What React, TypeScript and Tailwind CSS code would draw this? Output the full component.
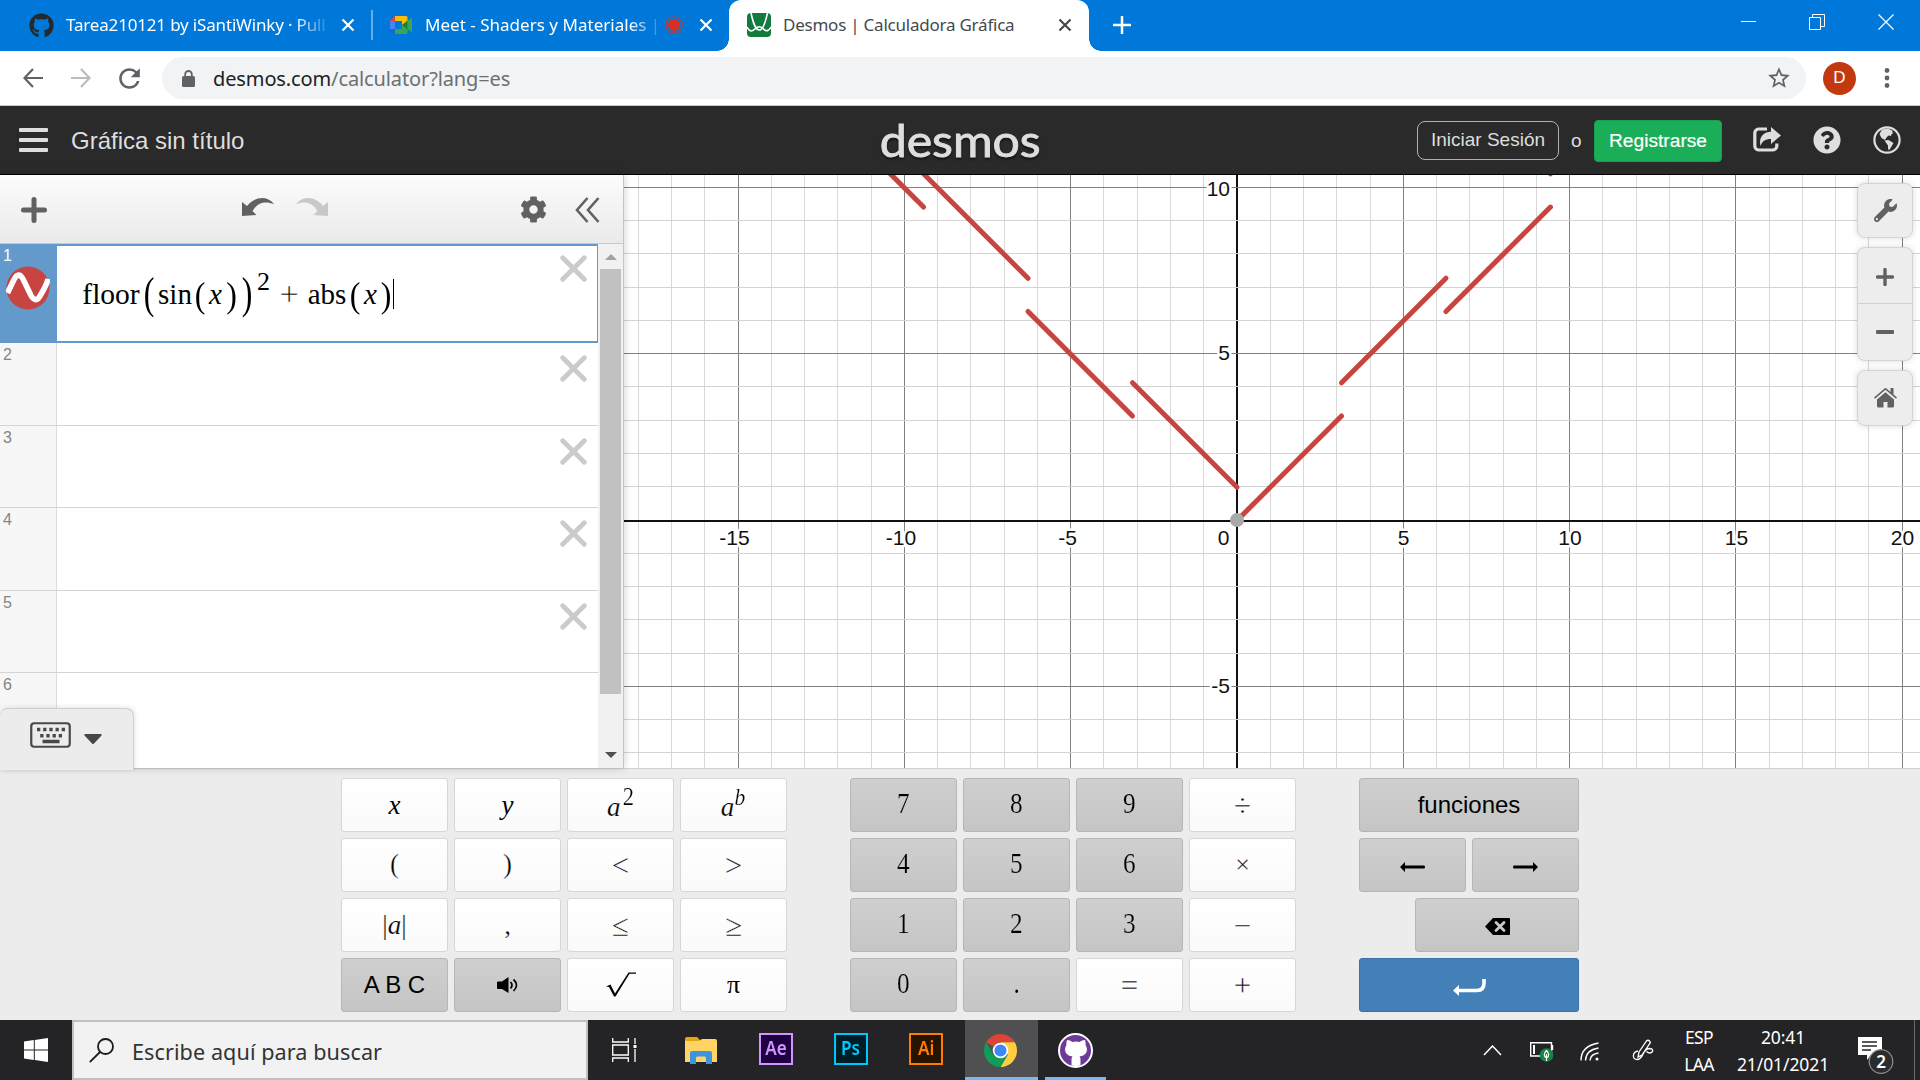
import React from "react";
import { FaGithub, FaCog, FaWrench, FaQuestionCircle } from "react-icons/fa";
import { MdStarBorder, MdRefresh } from "react-icons/md";

const UI = "font-['Noto_Sans','Open_Sans',sans-serif]";
const ARIAL = "font-['Liberation_Sans',Arial,sans-serif]";
const SERIF = "font-['Liberation_Serif','Times_New_Roman',serif]";

function TabClose({ className }: { className: string }) {
  return (
    <svg viewBox="0 0 14 14" className={`h-[14px] w-[14px] shrink-0 ${className}`}>
      <path d="M1.500 1.500 12.500 12.500M12.500 1.500 1.500 12.500" stroke="currentColor" strokeWidth="2.200" />
    </svg>
  );
}

function TabStrip() {
  return (
    <div className={`flex h-[51px] w-full items-center bg-[#0078d9] pb-px text-[17px] text-white ${UI}`}>
      <FaGithub className="ml-[29px] h-[25px] w-[25px] shrink-0 text-[#24292e]" />
      <div className="ml-[12px] w-[263px] pb-px whitespace-nowrap tracking-[-0.17px] [mask-image:linear-gradient(to_right,black_228px,transparent_266px)]">
        Tarea210121 by iSantiWinky · Pull
      </div>
      <TabClose className="ml-[12px]" />
      <div className="ml-[16px] h-[30px] w-[2px] shrink-0 bg-[#62adea]" />
      <svg viewBox="0 0 22 18" className="ml-[17px] h-[18px] w-[22px] shrink-0">
        <path d="M0 5 5 0V5Z" fill="#ea4335" />
        <path d="M5 0H16a1.500 1.500 0 0 1 1.500 1.500V6L12 9V5H5Z" fill="#fbbc04" />
        <path d="M0 5H5V13H0Z" fill="#4285f4" />
        <path d="M0 13H5V18H1.500A1.500 1.500 0 0 1 0 16.500Z" fill="#1967d2" />
        <path d="M5 13H12V9L17.500 12V16.500A1.500 1.500 0 0 1 16 18H5Z" fill="#34a853" />
        <path d="M12 9 17.500 4.500V13.500Z" fill="#188038" />
        <path d="M17.500 5 21 2.200Q22 1.700 22 2.800V15.200Q22 16.300 21 15.800L17.500 13Z" fill="#34a853" />
      </svg>
      <div className="ml-[13px] w-[232px] pb-px whitespace-nowrap tracking-[0.02px] [mask-image:linear-gradient(to_right,black_205px,rgba(0,0,0,0.25)_230px)]">
        Meet - Shaders y Materiales |
      </div>
      <svg viewBox="0 0 18 18" className="ml-[8px] h-[18px] w-[18px] shrink-0">
        <circle cx="9" cy="9" r="8.200" fill="none" stroke="#b7403f" strokeWidth="1.300" />
        <circle cx="9" cy="9" r="6" fill="#d93025" />
      </svg>
      <TabClose className="ml-[16px]" />
      <div className="relative mt-px ml-[16px] flex h-[51px] w-[360px] shrink-0 items-center rounded-t-[12px] bg-white pb-px text-[#45494d]">
        <div className="absolute bottom-0 left-[-12px] h-[12px] w-[12px] bg-[radial-gradient(circle_at_0_0,#0078d9_11.5px,white_12px)]" />
        <div className="absolute right-[-12px] bottom-0 h-[12px] w-[12px] bg-[radial-gradient(circle_at_100%_0,#0078d9_11.5px,white_12px)]" />
        <svg viewBox="0 0 24 24" className="ml-[18px] h-[24px] w-[24px] shrink-0">
          <rect width="24" height="24" rx="4" fill="#127a3d" />
          <g fill="none" stroke="white" strokeWidth="1.600">
            <path d="M4 0C6 9 8 17 12.500 17C16 17 18.500 9 20.500 0" />
            <path d="M0 14C3 20 6 18 8.500 15.500C11 13 14 13 16.500 16C19 19 22 18 24 14" />
          </g>
        </svg>
        <div className="ml-[12px] w-[264px] pb-px whitespace-nowrap tracking-[-0.23px]">Desmos | Calculadora Gráfica</div>
        <TabClose className="ml-[11px]" />
      </div>
      <svg viewBox="0 0 18 18" className="ml-[24px] h-[18px] w-[18px] shrink-0">
        <path d="M9 0V18M0 9H18" stroke="white" strokeWidth="2.500" />
      </svg>
      <svg viewBox="0 0 16 16" className="mb-[7px] ml-auto h-[16px] w-[16px] shrink-0">
        <path d="M0 7.500H15" stroke="white" />
      </svg>
      <svg viewBox="0 0 16 16" className="mb-[7px] ml-[52px] h-[16px] w-[16px] shrink-0" fill="none" stroke="white">
        <path d="M0.500 3.500H11.500V15.500H0.500ZM3.500 3V0.500H15.500V12.500H12" />
      </svg>
      <svg viewBox="0 0 16 16" className="mr-[26px] mb-[7px] ml-[53px] h-[16px] w-[16px] shrink-0">
        <path d="M0.500 0.500 15.500 15.500M15.500 0.500 0.500 15.500" stroke="white" strokeWidth="1.200" />
      </svg>
    </div>
  );
}

function AddressBar() {
  return (
    <div className={`flex h-[55px] items-center border-b border-[#c9cacc] bg-white ${UI}`}>
      <svg viewBox="0 0 20 20" className="ml-[23px] h-[20px] w-[20px] shrink-0" fill="none" stroke="#5f6368" strokeWidth="2.200">
        <path d="M10 1 1.500 10 10 19M1.500 10H20" />
      </svg>
      <svg viewBox="0 0 20 20" className="ml-[28px] h-[20px] w-[20px] shrink-0" fill="none" stroke="#babcbe" strokeWidth="2.200">
        <path d="M10 1 18.500 10 10 19M18.500 10H0" />
      </svg>
      <MdRefresh className="ml-[23px] h-[31px] w-[31px] shrink-0 text-[#5f6368]" />
      <div className="ml-[17px] flex h-[42px] w-[1644px] items-center rounded-full bg-[#f1f3f4]">
        <svg viewBox="0 0 13 17" className="ml-[20px] h-[17px] w-[13px]">
          <rect y="6" width="13" height="11" rx="1.500" fill="#5f6368" />
          <path d="M3.200 7V4.300A3.300 3.300 0 0 1 9.800 4.300V7" fill="none" stroke="#5f6368" strokeWidth="1.800" />
        </svg>
        <div className="mt-px ml-[18px] flex-1 text-[20px] tracking-[-0.12px] text-[#6b6f73]">
          <span className="text-[#202124]">desmos.com</span>/calculator?lang=es
        </div>
        <MdStarBorder className="mr-[14px] h-[26px] w-[26px] text-[#5f6368]" />
      </div>
      <div className={`ml-[17px] flex h-[33px] w-[33px] items-center justify-center rounded-full bg-[#c2390f] text-[17px] text-white ${ARIAL}`}>D</div>
      <svg viewBox="0 0 6 20" className="ml-[28px] h-[20px] w-[6px] shrink-0" fill="#5f6368">
        <circle cx="3" cy="2.500" r="2.400" />
        <circle cx="3" cy="10" r="2.400" />
        <circle cx="3" cy="17.500" r="2.400" />
      </svg>
    </div>
  );
}

function Header() {
  return (
    <div className={`relative flex h-[69px] items-center border-b border-black bg-[#2a2a2a] pt-px text-[#dedede] ${ARIAL}`}>
      <div className="mb-px ml-[19px] flex w-[29px] flex-col gap-[6px]">
        <div className="h-[4px] rounded-[1px] bg-[#dedede]" />
        <div className="h-[4px] rounded-[1px] bg-[#dedede]" />
        <div className="h-[4px] rounded-[1px] bg-[#dedede]" />
      </div>
      <div className="ml-[23px] flex-1 text-[24px]">Gráfica sin título</div>
      <div className="absolute inset-x-0 top-px flex h-[67px] justify-center font-['Lato',sans-serif] text-[45px] leading-[67px] font-normal [-webkit-text-stroke:0.9px_#dedede]">
        <span className="scale-x-[1.07] drop-shadow-[0_2px_1px_rgba(0,0,0,0.5)]">desmos</span>
      </div>
      <div className="mb-px flex h-[39px] w-[142px] items-center justify-center rounded-[8px] border border-[#b0b0b0] pt-px text-[19px]">Iniciar Sesión</div>
      <div className="mt-px ml-[12px] w-[23px] text-[19px]">o</div>
      <div className="flex h-[42px] w-[128px] items-center justify-center rounded-[4px] border border-[#1a9f50] bg-[#1aae58] pt-[2px] text-[19.2px] text-white [-webkit-text-stroke:0.2px_white]">Registrarse</div>
      <svg viewBox="0 0 28 25" className="mb-[2px] ml-[31px] h-[25px] w-[28px]">
        <path d="M14 2H5.500A4 4 0 0 0 1.800 6V19A4 4 0 0 0 5.500 23H20A4 4 0 0 0 23.800 19V16.500" fill="none" stroke="#dedede" strokeWidth="3.200" />
        <path d="M18 0 28 8.500 18 17V12C12 12 9 14.500 7.500 19C5.500 11 10 5 18 4.800Z" fill="#dedede" />
      </svg>
      <FaQuestionCircle className="mb-px ml-[32px] h-[28px] w-[28px]" />
      <svg viewBox="0 0 28 28" className="mr-[19px] mb-[2px] ml-[32px] h-[28px] w-[28px]">
        <circle cx="14" cy="14" r="12.600" fill="none" stroke="#dedede" strokeWidth="2.200" />
        <path d="M9 3.500 15 2.500 19 4.500 20 7.500 18.500 8 18 10 15.500 9.500 13.500 11.500 12 14 8.500 12 6.500 8Z" fill="#dedede" />
        <path d="M11.500 14.500 15.500 14 20.500 17 18.500 20.500 16 24.500 15 22.500V19.500Z" fill="#dedede" />
      </svg>
    </div>
  );
}

function DeleteCross({ className = "" }: { className?: string }) {
  return (
    <svg viewBox="0 0 27 27" className={`h-[27px] w-[27px] shrink-0 ${className}`}>
      <path d="M2.700 2.700 24.300 24.300M24.300 2.700 2.700 24.300" stroke="#cbcbcb" strokeWidth="4.800" strokeLinecap="round" />
    </svg>
  );
}

function Glyph({ w, children, className = "" }: { w: string; children: React.ReactNode; className?: string }) {
  return <span className={`flex shrink-0 justify-center ${w} ${className}`}>{children}</span>;
}

function Expression() {
  return (
    <div className={`mt-[28px] ml-[24px] flex h-[40px] flex-1 items-center text-[29px] leading-[40px] text-black ${SERIF}`}>
      <Glyph w="w-[60px]" className="text-[29.5px]">floor</Glyph>
      <Glyph w="w-[16px]" className="mb-[2px] scale-x-110 scale-y-[1.5]">(</Glyph>
      <Glyph w="w-[36px]">sin</Glyph>
      <Glyph w="w-[14px]" className="mb-px scale-x-110 scale-y-[1.27]">(</Glyph>
      <Glyph w="w-[17px]" className="italic">x</Glyph>
      <Glyph w="w-[15px]" className="mb-px scale-x-110 scale-y-[1.27]">)</Glyph>
      <Glyph w="w-[16px]" className="mb-[2px] scale-x-110 scale-y-[1.5]">)</Glyph>
      <Glyph w="w-[17px]" className="mb-[24px] text-[26px]">2</Glyph>
      <Glyph w="w-[34px]" className="text-[34px] [-webkit-text-stroke:0.4px_white]">+</Glyph>
      <Glyph w="w-[42px]">abs</Glyph>
      <Glyph w="w-[14px]" className="mb-px scale-x-110 scale-y-[1.27]">(</Glyph>
      <Glyph w="w-[17px]" className="italic">x</Glyph>
      <Glyph w="w-[14px]" className="mb-px scale-x-110 scale-y-[1.27]">)</Glyph>
      <span className="h-[30px] w-px bg-black" />
    </div>
  );
}

function ExpressionPanel() {
  return (
    <div className="relative z-10 flex h-[593px] w-[624px] shrink-0 flex-col border-r border-[#c4c4c4] bg-white shadow-[0_0_8px_rgba(0,0,0,0.2)]">
      <div className="flex h-[69px] shrink-0 items-center border-b border-[#c8c8c8] bg-linear-to-b from-[#fcfcfc] to-[#eaeaea] pt-px">
        <svg viewBox="0 0 26 26" className="ml-[21px] h-[26px] w-[26px]">
          <path d="M13 2.500V23.500M2.500 13H23.500" stroke="#616161" strokeWidth="5" strokeLinecap="round" />
        </svg>
        <svg viewBox="0 0 32 18" className="mb-[6px] ml-[195px] h-[18px] w-[32px]">
          <path d="M0 4 5 8C11 0 24 -4 32 6C23 3 16 4 10.500 13L14.500 17 0 18Z" fill="#616161" />
        </svg>
        <svg viewBox="0 0 32 18" className="mb-[6px] ml-[22px] h-[18px] w-[32px]">
          <path d="M32 4 27 8C21 0 8 -4 0 6C9 3 16 4 21.500 13L17.500 17 32 18Z" fill="#c8c8c8" />
        </svg>
        <FaCog className="ml-[192px] h-[27px] w-[27px] text-[#616161]" />
        <svg viewBox="0 0 25 26" className="ml-[28px] h-[26px] w-[25px]">
          <path d="M12.500 1 2 13 12.500 25M23.500 1 13 13 23.500 25" fill="none" stroke="#616161" strokeWidth="2.600" />
        </svg>
      </div>
      <div className="flex min-h-0 flex-1">
        <div className="flex w-[598px] flex-col overflow-hidden">
          <div className="flex h-[99px] shrink-0 border-y-2 border-r border-[#6499cc]">
            <div className={`w-[57px] bg-[#6499cc] pl-[3px] text-[16px] leading-[20px] text-white ${ARIAL}`}>
              1
              <svg viewBox="0 0 44 44" className="ml-[3px] h-[44px] w-[44px]">
                <circle cx="22" cy="22" r="21.500" fill="#c74440" />
                <path d="M1.500 27 8 13.500Q12.500 5 17 13L25 29.500Q29.500 37.500 34 30L38 23Q41.500 16 42 13" fill="none" stroke="white" strokeWidth="5.600" />
              </svg>
            </div>
            <Expression />
            <DeleteCross className="mt-[9px] mr-[10px]" />
          </div>
          {["2", "3", "4", "5", "6"].map((n) => (
            <div key={n} className={n === "6" ? "flex flex-1" : "flex h-[82.6px] shrink-0 border-b border-[#d4d4d4]"}>
              <div className={`w-[57px] border-r border-[#dcdcdc] bg-[#f7f7f7] pl-[3px] text-[16px] leading-[23px] text-[#858585] ${ARIAL}`}>{n}</div>
              <div className="flex-1" />
              {n !== "6" && <DeleteCross className="mt-[12px] mr-[11px]" />}
            </div>
          ))}
        </div>
        <div className="flex w-[25px] flex-col items-center bg-[#f1f1f1]">
          <svg viewBox="0 0 12 6" className="mt-[10px] h-[6px] w-[12px]"><path d="M0 6 6 0 12 6Z" fill="#a3a3a3" /></svg>
          <div className="mt-[9px] h-[425px] w-[21px] bg-[#c1c1c1]" />
          <svg viewBox="0 0 12 6" className="mt-[58px] h-[6px] w-[12px]"><path d="M0 0H12L6 6Z" fill="#505050" /></svg>
        </div>
      </div>
      <div className="absolute bottom-[-2px] left-0 flex h-[62px] w-[134px] items-center rounded-t-[8px] border-t border-r border-[#cfcfcf] bg-[#ececec] shadow-[1px_-1px_5px_rgba(0,0,0,0.1)]">
        <svg viewBox="0 0 41 26" className="mb-[10px] ml-[30px] h-[26px] w-[41px]">
          <rect x="1.250" y="1.250" width="38.500" height="23.500" rx="3" fill="none" stroke="#484848" strokeWidth="2.200" />
          <path d="M7 7.500H35" stroke="#484848" strokeWidth="3.500" strokeDasharray="3.300 2.870" />
          <path d="M10.200 13.800H32.500" stroke="#484848" strokeWidth="3.500" strokeDasharray="3.300 2.870" />
          <path d="M12.500 19.500H29.500" stroke="#484848" strokeWidth="3.500" />
        </svg>
        <svg viewBox="0 0 18 10" className="mb-[2px] ml-[13px] h-[10px] w-[18px]"><path d="M1 0H17Q18 0.500 17.500 1.500L10 9.500Q9 10.500 8 9.500L0.500 1.500Q0 0.500 1 0Z" fill="#484848" /></svg>
      </div>
    </div>
  );
}

const OX = 1237;
const OY = 520.5;
const UNIT = 33.26;
const gx = (x: number) => OX + x * UNIT;
const gy = (y: number) => OY - y * UNIT;

const xLines = Array.from({ length: 39 }, (_, i) => i - 18);
const yLines = Array.from({ length: 18 }, (_, i) => i - 7);
const PI = Math.PI;

const segments = [-4, -3, -2, -1, 0, 1, 2, 3].map((k) => {
  const lift = k % 2 === 0 ? 0 : 1;
  const a = k * PI;
  const b = (k + 1) * PI;
  return [gx(a), gy(Math.abs(a) + lift), gx(b), gy(Math.abs(b) + lift)];
});

function Graph() {
  return (
    <svg viewBox="624 175 1296 593" className="h-[593px] w-[1296px] shrink-0 bg-white">
      <g shapeRendering="crispEdges">
        {xLines.map((x) => (
          <rect key={x} x={Math.floor(gx(x)) - (x === 0 ? 1 : 0)} y={175} width={x === 0 ? 2 : 1} height={593} fill={x === 0 ? "#111" : x % 5 === 0 ? "#808080" : "#d8d8d8"} />
        ))}
        {yLines.map((y) => (
          <rect key={y} x={624} y={Math.round(gy(y)) - 1} width={1296} height={y === 0 ? 2 : 1} fill={y === 0 ? "#111" : y % 5 === 0 ? "#808080" : "#d4d4d4"} />
        ))}
      </g>
      {segments.map(([x1, y1, x2, y2]) => (
        <line key={x1} x1={x1} y1={y1} x2={x2} y2={y2} stroke="#c74440" strokeWidth="5" strokeLinecap="round" />
      ))}
      <circle cx={OX} cy={OY - 0.5} r="7" fill="#a9a9a9" />
      <g className={ARIAL} fontSize="21" fill="#111" stroke="white" strokeWidth="5" paintOrder="stroke" strokeLinejoin="round">
        <text x="734.500" y="545" textAnchor="middle">-15</text>
        <text x="901" y="545" textAnchor="middle">-10</text>
        <text x="1067.500" y="545" textAnchor="middle">-5</text>
        <text x="1229.500" y="545" textAnchor="end">0</text>
        <text x="1403.500" y="545" textAnchor="middle">5</text>
        <text x="1570" y="545" textAnchor="middle">10</text>
        <text x="1736.500" y="545" textAnchor="middle">15</text>
        <text x="1902.500" y="545" textAnchor="middle">20</text>
        <text x="1230" y="195.500" textAnchor="end">10</text>
        <text x="1230" y="360" textAnchor="end">5</text>
        <text x="1230" y="693" textAnchor="end">-5</text>
      </g>
    </svg>
  );
}

function ZoomControls() {
  return (
    <div className="absolute top-[8px] right-[7px] z-10 flex w-[56px] flex-col gap-[9px] text-[#616161]">
      <div className="flex h-[55px] items-center justify-center rounded-[8px] border border-[#d4d4d4] bg-[#ededed] shadow-[0_0_6px_rgba(0,0,0,0.15)]">
        <FaWrench className="mb-px h-[23px] w-[23px]" />
      </div>
      <div className="flex h-[114px] flex-col rounded-[8px] border border-[#d4d4d4] bg-[#ededed] shadow-[0_0_6px_rgba(0,0,0,0.15)]">
        <div className="flex h-[56px] items-center justify-center border-b border-[#d2d2d2]">
          <svg viewBox="0 0 18 18" className="mt-[3px] h-[18px] w-[18px]"><path d="M9 1.500V16.500M1.500 9H16.500" stroke="currentColor" strokeWidth="3.400" strokeLinecap="round" /></svg>
        </div>
        <div className="flex flex-1 items-center justify-center">
          <svg viewBox="0 0 18 18" className="h-[18px] w-[18px]"><path d="M1.500 9H16.500" stroke="currentColor" strokeWidth="4" strokeLinecap="round" /></svg>
        </div>
      </div>
      <div className="flex h-[56px] items-center justify-center rounded-[8px] border border-[#d4d4d4] bg-[#ededed] shadow-[0_0_6px_rgba(0,0,0,0.15)]">
        <svg viewBox="0 0 23 20" className="mb-px h-[20px] w-[23px]" fill="#616161">
          <path d="M16.500 0H19.500V6.500L23 9.500 22 10.800 11.500 1.800 1 10.800 0 9.500 10.500 .4Q11.500-.3 12.500 .4L16.500 4Z" />
          <path d="M11.500 4.200 20 11.500V18Q20 19.500 18.500 19.500H13.500V14H9.500V19.500H4.500Q3 19.500 3 18V11.500Z" />
        </svg>
      </div>
    </div>
  );
}

const KEY = "flex h-[54px] items-center justify-center rounded-[3px] border text-black";
const LIGHT = `${KEY} border-[#d6d6d6] bg-linear-to-b from-white to-[#fafafa]`;
const DARK = `${KEY} border-[#b6b6b6] bg-linear-to-b from-[#cfcfcf] to-[#c5c5c5]`;

function Key({ dark = false, className = "", children }: { dark?: boolean; className?: string; children: React.ReactNode }) {
  return <div className={`${dark ? DARK : LIGHT} ${className}`}>{children}</div>;
}

function Digit({ children }: { children: React.ReactNode }) {
  return (
    <Key dark>
      <span className="mb-[3px] scale-x-[0.87] text-[29px] [-webkit-text-stroke:0.2px_#cacaca]">{children}</span>
    </Key>
  );
}

function Op({ children, className = "text-[31px] [-webkit-text-stroke:0.35px_white]" }: { children: React.ReactNode; className?: string }) {
  return (
    <Key>
      <span className={`leading-none ${className}`}>{children}</span>
    </Key>
  );
}

function Keypad() {
  return (
    <div className={`relative z-[5] flex h-[252px] gap-[63px] border-t border-[#d0d0d0] bg-[#ececec] pt-[9px] pl-[341px] ${SERIF}`}>
      <div className="grid h-[234px] w-[446px] grid-cols-4 gap-[6px]">
        <Op className="text-[27px] italic">x</Op>
        <Op className="text-[27px] italic">y</Op>
        <Key className="text-[27px] italic [-webkit-text-stroke:0.2px_white]">
          <span className="mt-[4px]">a</span>
          <span className="mb-[16px] ml-px scale-x-90 text-[25px] not-italic">2</span>
        </Key>
        <Key className="text-[27px] italic [-webkit-text-stroke:0.2px_white]">
          <span className="mt-[4px]">a</span>
          <span className="mb-[16px] scale-x-90 text-[24px]">b</span>
        </Key>
        <Op className="mb-[2px] text-[27px] [-webkit-text-stroke:0.3px_white]">(</Op>
        <Op className="mb-[2px] text-[27px] [-webkit-text-stroke:0.3px_white]">)</Op>
        <Op>&lt;</Op>
        <Op>&gt;</Op>
        <Key className="text-[27px] [-webkit-text-stroke:0.2px_white]">
          <span>|</span><span className="italic">a</span><span>|</span>
        </Key>
        <Op className="text-[27px] [-webkit-text-stroke:0.3px_white]">,</Op>
        <Op>≤</Op>
        <Op>≥</Op>
        <Key dark className={`text-[24px] ${ARIAL}`}>A B C</Key>
        <Key dark>
          <svg viewBox="0 0 21 16" className="h-[16px] w-[21px]">
            <path d="M1 4.500H5L11.500 0V16L5 12H1Q0 12 0 11V5.500Q0 4.500 1 4.500Z" />
            <path d="M13.500 5Q16.500 8 13.500 11.500M16.500 2.500Q22.500 8 16.500 14" fill="none" stroke="black" strokeWidth="1.700" />
          </svg>
        </Key>
        <Key>
          <svg viewBox="0 0 30 25" className="mb-px h-[25px] w-[30px]">
            <path d="M0 14.500 4.500 12.500 9 21.500 22.500 .5H30V1.700H23.500L9.500 24.500H8L3 15Z" />
          </svg>
        </Key>
        <Op className="text-[26px]">π</Op>
      </div>
      <div className="grid h-[234px] w-[446px] grid-cols-4 gap-[6px]">
        <Digit>7</Digit>
        <Digit>8</Digit>
        <Digit>9</Digit>
        <Op>÷</Op>
        <Digit>4</Digit>
        <Digit>5</Digit>
        <Digit>6</Digit>
        <Op className="text-[26px] [-webkit-text-stroke:0.3px_white]">×</Op>
        <Digit>1</Digit>
        <Digit>2</Digit>
        <Digit>3</Digit>
        <Op>−</Op>
        <Digit>0</Digit>
        <Digit>.</Digit>
        <Op>=</Op>
        <Op>+</Op>
      </div>
      <div className={`flex h-[234px] w-[220px] flex-col gap-[6px] ${ARIAL}`}>
        <Key dark className="text-[24px]">funciones</Key>
        <div className="grid grid-cols-2 gap-[6px]">
          <Key dark>
            <svg viewBox="0 0 25 10" className="mt-[3px] h-[10px] w-[25px]"><path d="M0 5 5 0V3.500H24Q25 3.500 25 5T24 6.500H5V10Z" /></svg>
          </Key>
          <Key dark>
            <svg viewBox="0 0 25 10" className="mt-[3px] h-[10px] w-[25px]"><path d="M25 5 20 0V3.500H1Q0 3.500 0 5T1 6.500H20V10Z" /></svg>
          </Key>
        </div>
        <Key dark className="ml-[56px]">
          <svg viewBox="0 0 25 17" className="mt-[3px] h-[17px] w-[25px]">
            <path d="M0 8.500 8 0H24Q25 0 25 1V16Q25 17 24 17H8Z" />
            <path d="M11 4.500 19 12.500M19 4.500 11 12.500" stroke="#cacaca" strokeWidth="2.800" strokeLinecap="round" />
          </svg>
        </Key>
        <div className="flex h-[54px] items-center justify-center rounded-[3px] border border-[#3a72a8] bg-[#4480b8]">
          <svg viewBox="0 0 33 17" className="mt-[4px] h-[17px] w-[33px]">
            <path d="M4 11.500H24Q31 11.500 31 4V0" fill="none" stroke="white" strokeWidth="3.600" />
            <path d="M0 11.500 6 6V17Z" fill="white" />
          </svg>
        </div>
      </div>
    </div>
  );
}

function Adobe({ label, className }: { label: string; className: string }) {
  return (
    <div className={`mb-[3px] flex h-[32px] w-[34px] shrink-0 items-center justify-center border-2 text-[19px] leading-none font-semibold ${className}`}>
      <span className="scale-x-[0.9]">{label}</span>
    </div>
  );
}

function Taskbar() {
  return (
    <div className={`flex h-[60px] items-center bg-[#242426] text-white ${UI}`}>
      <svg viewBox="0 0 24 24" className="ml-[24px] h-[24px] w-[24px] shrink-0" fill="white">
        <path d="M0 3.400 9.800 2V11.500H0ZM10.800 1.900 24 0V11.500H10.800ZM0 12.500H9.800V22L0 20.600ZM10.800 12.500H24V24L10.800 22.100Z" />
      </svg>
      <div className="ml-[24px] flex h-[60px] w-[516px] shrink-0 items-center border-2 border-[#c0c0c0] bg-[#f2f2f2]">
        <svg viewBox="0 0 25 25" className="ml-[15px] h-[25px] w-[25px]" fill="none" stroke="#1a1a1a" strokeWidth="1.800">
          <circle cx="16.500" cy="8.500" r="7.500" />
          <path d="M11 14 .8 24.200" />
        </svg>
        <div className="mt-[5px] ml-[18px] text-[21.600px] tracking-[0.08px] whitespace-nowrap text-[#333]">Escribe aquí para buscar</div>
      </div>
      <svg viewBox="0 0 25 24" className="ml-[24px] h-[24px] w-[25px] shrink-0" fill="none" stroke="white" strokeWidth="1.300">
        <path d="M.7 0V4H16.300V0M.7 24V20H16.300V24M.7 7H16.300V17H.7ZM23 0V6M23 11V24" />
        <path d="M21.500 7H24.500V10H21.500Z" fill="white" stroke="none" />
      </svg>
      <svg viewBox="0 0 32 27" className="ml-[48px] h-[27px] w-[32px] shrink-0">
        <path d="M0 2Q0 0 2 0H12L15 3V8H0Z" fill="#e5a50f" />
        <path d="M0 4H14L17 2H30Q32 2 32 4V25H0Z" fill="#ffd464" />
        <path d="M5 16Q5 14 7 14H25Q27 14 27 16V27H21V21Q21 19.500 19.500 19.500H12.500Q11 19.500 11 21V27H5Z" fill="#3d95dd" />
      </svg>
      <Adobe label="Ae" className="ml-[42px] border-[#cf96fd] bg-[#1f0040] text-[#cf96fd]" />
      <Adobe label="Ps" className="ml-[41px] border-[#00c8ff] bg-[#001d26] text-[#00c8ff]" />
      <Adobe label="Ai" className="ml-[41px] border-[#ff7c00] bg-[#261300] text-[#ff7c00]" />
      <div className="ml-[22px] flex h-[60px] w-[73px] shrink-0 items-center justify-center border-b-[3px] border-[#76b9ed] bg-[#505052]">
        <svg viewBox="0 0 34 34" className="mt-[3px] mr-[2px] h-[33px] w-[33px]">
          <path d="M17 17 2.280 8.500A17 17 0 0 1 31.720 8.500L17 8.500Z" fill="#db4437" />
          <path d="M17 8.500H31.720A17 17 0 0 1 17 34L24.400 21.300Z" fill="#ffcd40" />
          <path d="M2.280 8.500A17 17 0 0 0 17 34L24.400 21.300 9.600 21.300Z" fill="#0f9d58" />
          <circle cx="17" cy="17" r="8" fill="white" />
          <circle cx="17" cy="17" r="6.200" fill="#4285f4" />
        </svg>
      </div>
      <div className="ml-[7px] flex h-[60px] w-[61px] shrink-0 items-center justify-center border-b-[3px] border-[#76b9ed]">
        <div className="mt-[3px] flex h-[35px] w-[35px] items-center justify-center overflow-hidden rounded-full border-2 border-white bg-[#6e3a9a]">
          <svg viewBox="0 0 34 34" className="h-[34px] w-[34px] shrink-0">
            <path d="M8 7Q11 7 13.500 9Q17 8 20.500 9Q23 7 26 7Q27 10 26.500 12Q28 14 28 16.500Q28 22.500 20.500 23.500Q21.500 24.500 21.500 26V34H12.500V26Q12.500 24.500 13.500 23.500Q6 22.500 6 16.500Q6 14 7.500 12Q7 10 8 7Z" fill="white" />
          </svg>
        </div>
      </div>
      <svg viewBox="0 0 19 11" className="ml-auto h-[11px] w-[19px] shrink-0" fill="none" stroke="white" strokeWidth="1.500"><path d="M1 10 9.500 1 18 10" /></svg>
      <svg viewBox="0 0 24 22" className="mt-[3px] ml-[28px] h-[22px] w-[24px] shrink-0">
        <path d="M.7 1.700H21.500V15H.7ZM22.500 4V9" fill="none" stroke="white" strokeWidth="1.400" />
        <path d="M3 4H5V13H3Z" fill="white" />
        <circle cx="16.500" cy="14" r="6.800" fill="#10893e" />
        <path d="M16.500 9.500Q21 14 16.500 17Q12 14 16.500 9.500ZM16.500 13V20" fill="none" stroke="white" strokeWidth="1.200" />
      </svg>
      <svg viewBox="0 0 20 19" className="mt-[3px] ml-[26px] h-[19px] w-[20px] shrink-0" fill="none" stroke="white" strokeWidth="1.400">
        <path d="M1 18.500Q1 4 18.500 1M5.500 18.500Q6 8 18.500 6M10 18.500Q10.500 12 18.500 11" />
        <circle cx="17" cy="17" r="1.500" fill="white" stroke="none" />
      </svg>
      <svg viewBox="0 0 22 22" className="ml-[32px] h-[22px] w-[22px] shrink-0" fill="none" stroke="white" strokeWidth="1.300">
        <path d="M7 13 14.500 2Q16 .5 17.500 2T17.500 5L10 16 6 18ZM6 12C0 13 0 20.500 5 20.500C12 20.500 10 10 17 9.500Q21.500 9.500 20.500 12.500Q18 15.500 14.500 12.500" />
      </svg>
      <div className="mt-px ml-[25px] flex w-[40px] flex-col items-center text-[17.500px] leading-[27px] tracking-[-0.6px]">
        <span>ESP</span><span>LAA</span>
      </div>
      <div className="mt-px ml-[12px] flex w-[104px] flex-col items-center text-[17.500px] leading-[27px] tracking-[-0.1px]">
        <span>20:41</span><span>21/01/2021</span>
      </div>
      <svg viewBox="0 0 38 38" className="mt-[12px] ml-[23px] h-[38px] w-[38px] shrink-0">
        <path d="M0 0H24V18H13L9 23V18H0Z" fill="white" />
        <path d="M4 5H19M4 9H19M4 13H13" stroke="#242426" strokeWidth="1.300" />
        <circle cx="23" cy="24.500" r="11.800" fill="#2c2c2e" stroke="#8e8e8e" strokeWidth="1.200" />
        <text x="23" y="30.500" textAnchor="middle" fontSize="17" fontWeight="600" fill="white">2</text>
      </svg>
      <div className="mr-[5px] ml-[18px] h-[60px] w-px shrink-0 bg-[#6a6a6a]" />
    </div>
  );
}

export default function App() {
  return (
    <div className="flex h-[1080px] w-[1920px] flex-col overflow-hidden bg-white">
      <TabStrip />
      <AddressBar />
      <Header />
      <div className="relative z-[6] flex h-[593px]">
        <ExpressionPanel />
        <Graph />
        <ZoomControls />
      </div>
      <Keypad />
      <Taskbar />
    </div>
  );
}
